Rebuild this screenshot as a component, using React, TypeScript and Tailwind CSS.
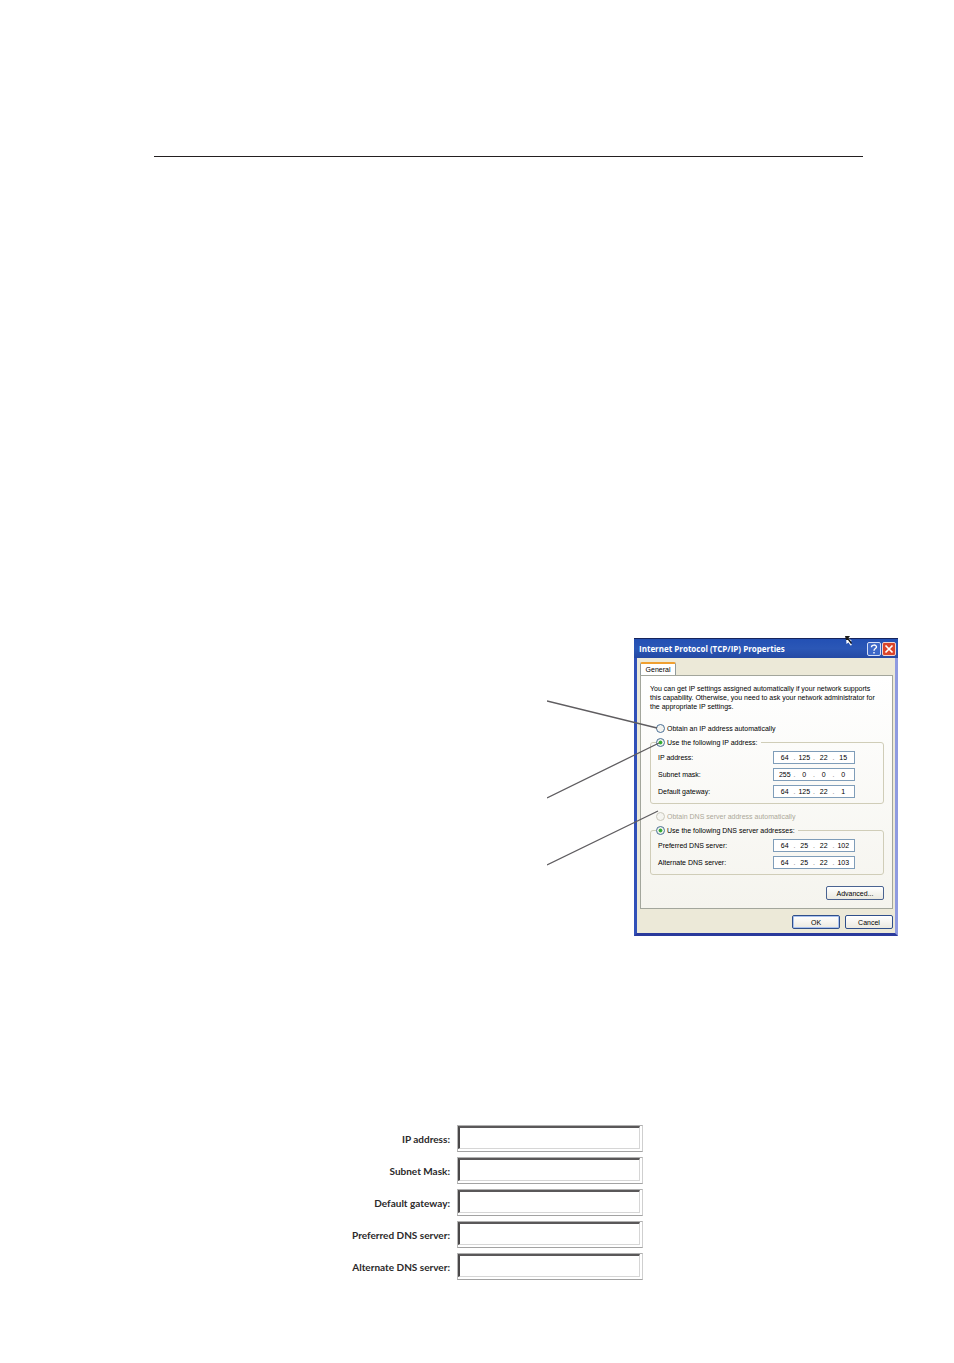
import React, { useId, useState } from 'react';

type IpFieldProps = {
  label: string;
  octets: string[];
};

const IpField: React.FC<IpFieldProps> = ({ label, octets }) => {
  const id = useId();
  return (
    <div className="flex h-[13px] items-center justify-between pl-[7px] pr-[28px]">
      <label htmlFor={id}>{label}</label>
      <div className="flex h-[13px] w-[82px] items-center border border-[#7f9db9] bg-white px-[2px]">
        {octets.map((octet, i) => (
          <React.Fragment key={i}>
            {i > 0 && <span className="w-[2px] text-[#777]">.</span>}
            <input
              id={i === 0 ? id : undefined}
              aria-label={i === 0 ? undefined : `${label} part ${i + 1}`}
              defaultValue={octet}
              className="h-[11px] w-0 min-w-0 flex-1 bg-transparent text-center outline-none"
            />
          </React.Fragment>
        ))}
      </div>
    </div>
  );
};

type RadioProps = {
  name: string;
  label: string;
  checked: boolean;
  disabled?: boolean;
  onSelect?: () => void;
};

const Radio: React.FC<RadioProps> = ({ name, label, checked, disabled, onSelect }) => (
  <label className={`flex h-[12px] items-center gap-[2px] ${disabled ? 'text-[#aca899]' : ''}`}>
    <input
      type="radio"
      name={name}
      checked={checked}
      disabled={disabled}
      onChange={() => onSelect?.()}
      className="size-[9px] shrink-0 appearance-none rounded-full border border-[#4a6f96] bg-[#f4f4f0] checked:bg-[radial-gradient(closest-side,#2fa52f_0,#3fb23f_45%,#eef3ea_65%)] disabled:border-[#cac8bb]"
    />
    <span className="whitespace-nowrap">{label}</span>
  </label>
);

const XpButton: React.FC<{ label: string; className: string }> = ({ label, className }) => (
  <button
    type="button"
    className={`flex h-[14px] items-center justify-center rounded-[2px] border bg-linear-to-b from-white to-[#ebe9e0] ${className}`}
  >
    {label}
  </button>
);

const PropertiesDialog: React.FC = () => {
  const [ipMode, setIpMode] = useState('manual');

  return (
    <section
      aria-label="Internet Protocol (TCP/IP) Properties"
      className="relative w-[264px] border-x-3 border-b-3 border-b-[#2a3a9c] border-l-[#3150b8] border-r-[#8f9be0] bg-[#ece9d8] font-['Liberation_Sans',sans-serif] text-[7px] leading-[9px] text-black"
    >
      {/* Title bar */}
      <div className="-mx-[3px] flex h-[20px] items-center justify-between border-t border-[#16245c] bg-linear-to-b from-[#2350b4] via-[#2b57b6] to-[#2449a4] pl-[5px] pr-[2px]">
        <h2 className="font-['Open_Sans',sans-serif] text-[8px] font-bold whitespace-nowrap text-white">
          Internet Protocol (TCP/IP) Properties
        </h2>
        <div className="flex gap-px">
          <button
            type="button"
            aria-label="Help"
            className="flex size-[14px] items-center justify-center rounded-[2px] border border-[#d5def5] bg-[#3d68c8] text-white"
          >
            <svg viewBox="0 0 12 12" className="size-[12px]" fill="none" stroke="currentColor" strokeWidth="1.4">
              <path d="M3.5 4.2C3.5 1.4 8.5 1.4 8.5 4C8.5 5.6 6 5.6 6 7.8M6 9V10.5" />
            </svg>
          </button>
          <button
            type="button"
            aria-label="Close"
            className="flex size-[14px] items-center justify-center rounded-[2px] border border-[#f0d5d0] bg-[#d9452b] text-white"
          >
            <svg viewBox="0 0 12 12" className="size-[12px]" fill="none" stroke="currentColor" strokeWidth="1.7">
              <path d="M2.5 2.5L9.5 9.5M9.5 2.5L2.5 9.5" />
            </svg>
          </button>
        </div>
      </div>

      <div className="pt-[4px] pr-[2px] pb-[4px] pl-[3px]">
        <div role="tablist" className="flex">
          <button
            type="button"
            role="tab"
            aria-selected="true"
            className="h-[13px] w-[36px] rounded-t-[2px] border-x border-t-2 border-x-[#919b9c] border-t-[#f0a030] bg-white"
          >
            General
          </button>
        </div>

        <div className="border border-[#a3a69c] bg-linear-to-b from-white to-[#f5f4ee] pt-[8px] pr-[8px] pb-[8px] pl-[9px]">
          <p>
            You can get IP settings assigned automatically if your network supports
            <br />
            this capability. Otherwise, you need to ask your network administrator for
            <br />
            the appropriate IP settings.
          </p>

          <div className="mt-[11px] pl-[6px]">
            <Radio
              name="ip"
              label="Obtain an IP address automatically"
              checked={ipMode === 'auto'}
              onSelect={() => setIpMode('auto')}
            />
          </div>
          <fieldset className="mt-[2px] rounded-[3px] border border-[#d0cdb8] pb-[5px]">
            <legend className="ml-[5px] pr-[3px]">
              <Radio
                name="ip"
                label="Use the following IP address:"
                checked={ipMode === 'manual'}
                onSelect={() => setIpMode('manual')}
              />
            </legend>
            <div className="flex flex-col gap-[4px] pt-[3px]">
              <IpField label="IP address:" octets={['64', '125', '22', '15']} />
              <IpField label="Subnet mask:" octets={['255', '0', '0', '0']} />
              <IpField label="Default gateway:" octets={['64', '125', '22', '1']} />
            </div>
          </fieldset>

          <div className="mt-[6px] pl-[6px]">
            <Radio name="dns" label="Obtain DNS server address automatically" checked={false} disabled />
          </div>
          <fieldset className="mt-[2px] rounded-[3px] border border-[#d0cdb8] pb-[5px]">
            <legend className="ml-[5px] pr-[3px]">
              <Radio name="dns" label="Use the following DNS server addresses:" checked />
            </legend>
            <div className="flex flex-col gap-[4px] pt-[3px]">
              <IpField label="Preferred DNS server:" octets={['64', '25', '22', '102']} />
              <IpField label="Alternate DNS server:" octets={['64', '25', '22', '103']} />
            </div>
          </fieldset>

          <div className="mt-[11px] flex justify-end">
            <XpButton label="Advanced..." className="w-[58px] border-[#4a6391]" />
          </div>
        </div>

        <div className="mt-[6px] flex justify-end gap-[5px]">
          <XpButton label="OK" className="w-[48px] border-[#2f4f8a] inset-ring inset-ring-[#a9c1ee]" />
          <XpButton label="Cancel" className="w-[48px] border-[#2f4f8a]" />
        </div>
      </div>

      {/* Mouse pointer */}
      <svg viewBox="0 0 8 10" className="pointer-events-none absolute -top-[2px] left-[208px] h-[10px] w-[8px]">
        <path d="M1 0L7 5L4.5 5.5L7 9L5.5 9.5L3.5 6.5L1.5 8Z" fill="#fff" />
        <path d="M0 0H5L3.5 2L7 7L6 8L3 4L1 4Z" fill="#1a1a1a" />
      </svg>

      {/* Callout lines */}
      <svg
        viewBox="0 0 114 170"
        className="pointer-events-none absolute top-[61px] -left-[90px] h-[170px] w-[114px]"
        fill="none"
        stroke="#5f5d60"
        strokeWidth="1.3"
      >
        <path d="M0 2L110 29M0 99L112 44M0 166L111 112" />
      </svg>
    </section>
  );
};

const fields = [
  'IP address:',
  'Subnet Mask:',
  'Default gateway:',
  'Preferred DNS server:',
  'Alternate DNS server:',
];

const SettingsForm: React.FC = () => (
  <form className="flex flex-col gap-[5px]">
    {fields.map((label, i) => (
      <div key={label} className="flex items-center gap-[7px]">
        <label
          htmlFor={`field-${i}`}
          className="flex w-[99px] justify-end font-['Lato',sans-serif] text-[10px] leading-[16px] font-bold whitespace-nowrap text-[#2b292a]"
        >
          {label}
        </label>
        <div className="h-[27px] w-[186px] border border-t-[#b0b0b0] border-r-[#cfcfcf] border-b-[#a3a3a3] border-l-[#b8b8b8] pr-[2px] pb-[2px]">
          <input
            id={`field-${i}`}
            type="text"
            className="block h-full w-full border border-t-2 border-l-2 border-t-[#5a5859] border-r-[#d6d6d6] border-b-[#d6d6d6] border-l-[#4a4849] bg-white px-1 text-[11px] outline-none"
          />
        </div>
      </div>
    ))}
  </form>
);

const App: React.FC = () => (
  <main className="w-full bg-white pb-[82px]">
    <header className="pt-[156px] pr-[91px] pl-[154px]">
      <hr className="border-t border-[#231f20]" />
    </header>
    <div className="mt-[481px] flex justify-end pr-[56px]">
      <PropertiesDialog />
    </div>
    <div className="mt-[189px] flex justify-center pl-[40px]">
      <SettingsForm />
    </div>
  </main>
);

export default App;
